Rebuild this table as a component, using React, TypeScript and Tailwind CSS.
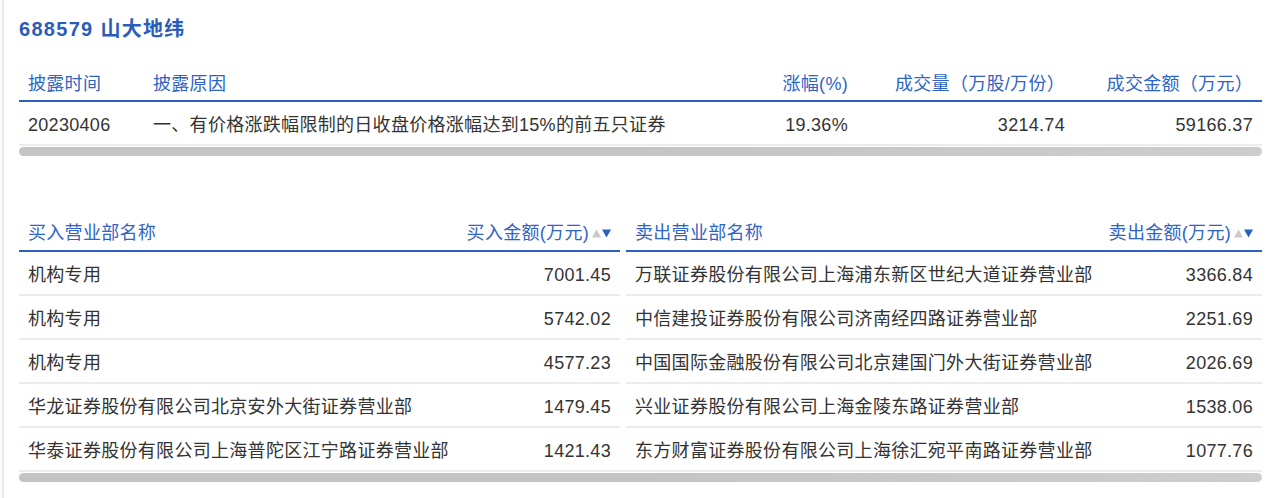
const topCols = "grid grid-cols-[125px_556px_157px_217px_188px]";

const buys = [
  ["机构专用", "7001.45"],
  ["机构专用", "5742.02"],
  ["机构专用", "4577.23"],
  ["华龙证券股份有限公司北京安外大街证券营业部", "1479.45"],
  ["华泰证券股份有限公司上海普陀区江宁路证券营业部", "1421.43"],
];

const sells = [
  ["万联证券股份有限公司上海浦东新区世纪大道证券营业部", "3366.84"],
  ["中信建投证券股份有限公司济南经四路证券营业部", "2251.69"],
  ["中国国际金融股份有限公司北京建国门外大街证券营业部", "2026.69"],
  ["兴业证券股份有限公司上海金陵东路证券营业部", "1538.06"],
  ["东方财富证券股份有限公司上海徐汇宛平南路证券营业部", "1077.76"],
];

function SortArrows() {
  return (
    <svg width="19" height="9" viewBox="0 0 19 9" className="ml-[3px] mt-[1px]">
      <path d="M0 8.5 L4.5 0.5 L9 8.5 Z" fill="#c9c9c9" />
      <path d="M10 0.5 L19 0.5 L14.5 8.5 Z" fill="#2b5fc0" />
    </svg>
  );
}

function Scrollbar() {
  return (
    <div className="h-[13px] border-t-2 border-[#ececec] bg-white pt-[1px]">
      <div className="h-[9px] rounded-full bg-gradient-to-r from-[#c4c4c4] via-[#c4c4c4] to-[#cdcdcd]" />
    </div>
  );
}

function SideTable({
  title,
  amountTitle,
  rows,
  className,
}: {
  title: string;
  amountTitle: string;
  rows: string[][];
  className: string;
}) {
  return (
    <div className={className}>
      <div className="flex h-[38px] items-center justify-between border-b-2 border-[#2b5fc0] px-[9px] pt-[2px] text-[#2f64c6]">
        <span>{title}</span>
        <span className="flex items-center">
          {amountTitle}
          <SortArrows />
        </span>
      </div>
      {rows.map((r, i) => (
        <div
          key={i}
          className={
            "flex items-center justify-between px-[9px] text-[#333] " +
            (i < rows.length - 1 ? "h-[44px] border-b-2 border-[#ebebeb] pt-[4px]" : "h-[42px] pt-[3px]")
          }
        >
          <span>{r[0]}</span>
          <span>{r[1]}</span>
        </div>
      ))}
    </div>
  );
}

export default function App() {
  return (
    <div
      className="min-h-[498px] w-[1286px] bg-white text-[18px] leading-6 tracking-[0.3px]"
      style={{ fontFamily: '"Liberation Sans", "Noto Sans CJK SC", sans-serif' }}
    >
      <div className="ml-[2px] min-h-[498px] border-l-2 border-[#e9e9ef] pl-[15px]">
        <div className="w-[1243px]">
          <h1 className="pt-[15px] text-[20px] font-bold leading-7 tracking-[1.3px] text-[#2a5cb9]">688579 山大地纬</h1>

          <div className="mt-[23px]">
            <div className={topCols + " h-[36px] items-center border-b-2 border-[#2b5fc0] pt-[2px] text-[#2f64c6]"}>
              <span className="px-[9px]">披露时间</span>
              <span className="px-[9px]">披露原因</span>
              <span className="px-[9px] text-right">涨幅(%)</span>
              <span className="px-[9px] text-right">成交量（万股/万份）</span>
              <span className="px-[9px] text-right">成交金额（万元）</span>
            </div>
            <div className={topCols + " h-[42px] items-center pt-[3px] text-[#333]"}>
              <span className="px-[9px]">20230406</span>
              <span className="whitespace-nowrap px-[9px]">一、有价格涨跌幅限制的日收盘价格涨幅达到15%的前五只证券</span>
              <span className="px-[9px] text-right">19.36%</span>
              <span className="px-[9px] text-right">3214.74</span>
              <span className="px-[9px] text-right">59166.37</span>
            </div>
            <Scrollbar />
          </div>

          <div className="mt-[57px]">
            <div className="flex gap-[6px]">
              <SideTable className="w-[601px]" title="买入营业部名称" amountTitle="买入金额(万元)" rows={buys} />
              <SideTable className="flex-1" title="卖出营业部名称" amountTitle="卖出金额(万元)" rows={sells} />
            </div>
            <Scrollbar />
          </div>
        </div>
      </div>
    </div>
  );
}
